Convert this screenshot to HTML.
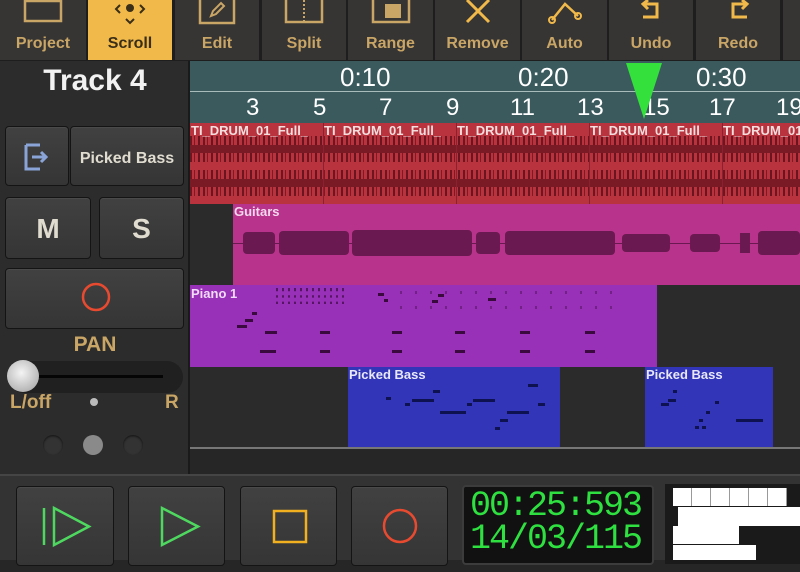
<!DOCTYPE html>
<html><head><meta charset="utf-8"><style>
*{margin:0;padding:0;box-sizing:border-box}
body{width:800px;height:560px;overflow:hidden;background:#262626;font-family:"Liberation Sans",sans-serif;position:relative}
.a{position:absolute}
.tb{position:absolute;top:0;height:60px;background:#363533;color:#c9a566;font-weight:bold;font-size:16px;text-align:center}
.tb span{position:absolute;left:0;right:0;top:35px}
.tb svg{position:absolute;left:50%;top:0;transform:translateX(-50%)}
.btn{position:absolute;background:linear-gradient(#414141,#353535);border:1px solid #141414;border-radius:4px;box-shadow:0 1px 0 #4a4a4a inset}
.lbl{color:#e0dcd0;font-weight:bold}
.wf{position:absolute;background:repeating-linear-gradient(90deg,#6e1620 0 2px,transparent 2px 4px,#7d1a26 4px 5px,transparent 5px 8px,#6a1420 8px 10px,transparent 10px 13px)}
.n{position:absolute;background:#3a0a3e;height:3px}
.b{position:absolute;background:#0f1250;height:3px}
.tl{color:#fff;font-size:32px}
</style></head><body>
<div class="a" style="left:0;top:0;width:800px;height:61px;background:#1e1e1e"></div>
<div class="tb" style="left:0;width:86px"><svg width="60" height="30"><rect x="12" y="1" width="36" height="20" fill="none" stroke="#c9a566" stroke-width="2.5"/></svg><span>Project</span></div>
<div class="tb" style="left:88px;width:84px;background:#f0b94a;color:#3a2e18"><svg width="60" height="30"><circle cx="30" cy="8" r="4" fill="#3a2e18"/><path d="M20 5l-4 4 4 4M40 5l4 4-4 4M26 19l4 4 4-4" fill="none" stroke="#3a2e18" stroke-width="2"/></svg><span>Scroll</span></div>
<div class="tb" style="left:175px;width:84px"><svg width="60" height="30"><rect x="13" y="-2" width="34" height="25" fill="none" stroke="#c9a566" stroke-width="2.5"/><path d="M24 16l2-5 8-8 3 3-8 8z" fill="none" stroke="#c9a566" stroke-width="2"/></svg><span>Edit</span></div>
<div class="tb" style="left:262px;width:84px"><svg width="60" height="30"><rect x="12" y="-2" width="36" height="24" fill="none" stroke="#c9a566" stroke-width="2.5"/><path d="M30 0v22" stroke="#c9a566" stroke-width="2" stroke-dasharray="2 2"/></svg><span>Split</span></div>
<div class="tb" style="left:348px;width:85px"><svg width="60" height="30"><rect x="12" y="-2" width="36" height="24" fill="none" stroke="#c9a566" stroke-width="2.5"/><rect x="24" y="4" width="16" height="14" fill="#c9a566"/></svg><span>Range</span></div>
<div class="tb" style="left:435px;width:85px"><svg width="60" height="30"><path d="M19 0l22 22M41 0L19 22" stroke="#f0b94a" stroke-width="3"/></svg><span>Remove</span></div>
<div class="tb" style="left:522px;width:85px"><svg width="60" height="30"><path d="M17 20l13-16 13 12" fill="none" stroke="#f0b94a" stroke-width="2.5"/><circle cx="17" cy="20" r="3" fill="none" stroke="#f0b94a" stroke-width="2"/><circle cx="43" cy="16" r="3" fill="none" stroke="#f0b94a" stroke-width="2"/></svg><span>Auto</span></div>
<div class="tb" style="left:609px;width:84px"><svg width="60" height="30"><path d="M27 0l-5 4 5 5M22 4h14v13h-14" fill="none" stroke="#f0b94a" stroke-width="3"/></svg><span>Undo</span></div>
<div class="tb" style="left:696px;width:84px"><svg width="60" height="30"><path d="M34 0l5 4-5 5M39 4h-14v13h14" fill="none" stroke="#f0b94a" stroke-width="3"/></svg><span>Redo</span></div>
<div class="tb" style="left:783px;width:17px"></div>
<div class="a" style="left:0;top:61px;width:188px;height:414px;background:#2c2c2c"></div>
<div class="a lbl" style="left:0;top:64px;width:190px;text-align:center;font-size:30px;color:#f2f2f2">Track 4</div>
<div class="btn" style="left:5px;top:126px;width:64px;height:60px"><svg width="64" height="60"><path d="M20 18h14M20 18v24h14M20 18v24" fill="none" stroke="#8aa4d8" stroke-width="3"/><path d="M26 30h14M35 25l5 5-5 5" fill="none" stroke="#8aa4d8" stroke-width="3"/></svg></div>
<div class="btn lbl" style="left:70px;top:126px;width:114px;height:60px;font-size:16px;text-align:center;line-height:64px">Picked Bass</div>
<div class="btn lbl" style="left:5px;top:197px;width:86px;height:62px;font-size:28px;text-align:center;line-height:62px">M</div>
<div class="btn lbl" style="left:99px;top:197px;width:85px;height:62px;font-size:28px;text-align:center;line-height:62px">S</div>
<div class="btn" style="left:5px;top:268px;width:179px;height:61px"><svg width="179" height="61"><circle cx="90" cy="28" r="13" fill="none" stroke="#e84a30" stroke-width="2.5"/></svg></div>
<div class="a" style="left:0;top:333px;width:190px;text-align:center;color:#c9a566;font-weight:bold;font-size:21px">PAN</div>
<div class="a" style="left:8px;top:361px;width:175px;height:32px;background:#202020;border-radius:16px"></div>
<div class="a" style="left:30px;top:375px;width:133px;height:3px;background:#050505"></div>
<div class="a" style="left:7px;top:360px;width:32px;height:32px;border-radius:50%;background:radial-gradient(circle at 45% 40%,#f4f4f4,#b8b8b8 70%,#888)"></div>
<div class="a" style="left:10px;top:392px;color:#c9a566;font-weight:bold;font-size:19px">L/off</div>
<div class="a" style="left:165px;top:392px;color:#c9a566;font-weight:bold;font-size:19px">R</div>
<div class="a" style="left:90px;top:398px;width:8px;height:8px;border-radius:50%;background:#bbb"></div>
<div class="a" style="left:43px;top:435px;width:20px;height:20px;border-radius:50%;background:#333;box-shadow:inset 0 1px 2px #111"></div>
<div class="a" style="left:83px;top:435px;width:20px;height:20px;border-radius:50%;background:#8a8a8a"></div>
<div class="a" style="left:123px;top:435px;width:20px;height:20px;border-radius:50%;background:#333;box-shadow:inset 0 1px 2px #111"></div>
<div class="a" style="left:190px;top:61px;width:610px;height:62px;background:#3a5a5e"></div>
<div class="a" style="left:190px;top:91px;width:610px;height:1px;background:#a8bcbc"></div>
<div class="a tl" style="left:340px;top:62px;font-size:26px">0:10</div>
<div class="a tl" style="left:518px;top:62px;font-size:26px">0:20</div>
<div class="a tl" style="left:696px;top:62px;font-size:26px">0:30</div>
<div class="a" style="left:190px;top:94px;width:610px;height:28px;color:#fff;font-size:24px">
<span class="a" style="left:56px">3</span><span class="a" style="left:123px">5</span><span class="a" style="left:189px">7</span><span class="a" style="left:256px">9</span><span class="a" style="left:320px">11</span><span class="a" style="left:387px">13</span><span class="a" style="left:453px">15</span><span class="a" style="left:519px">17</span><span class="a" style="left:586px">19</span></div>
<svg class="a" style="left:624px;top:61px" width="40" height="60"><path d="M2 2h36L20 58z" fill="#34e03c"/></svg>
<div class="a" style="left:190px;top:123px;width:610px;height:81px;background:#b8333e"></div>
<div class="wf" style="left:190px;top:136px;width:610px;height:26px"></div>
<div class="wf" style="left:190px;top:170px;width:610px;height:26px"></div>
<div class="a" style="left:190px;top:145px;width:610px;height:8px;background:#7a1a24"></div>
<div class="a" style="left:190px;top:179px;width:610px;height:8px;background:#7a1a24"></div>
<div class="a" style="left:190px;top:123px;width:610px;height:16px;color:#f4dede;font-weight:bold;font-size:13px;white-space:nowrap">
<span class="a" style="left:1px">TI_DRUM_01_Full_</span><span class="a" style="left:134px">TI_DRUM_01_Full_</span><span class="a" style="left:267px">TI_DRUM_01_Full_</span><span class="a" style="left:400px">TI_DRUM_01_Full_</span><span class="a" style="left:533px">TI_DRUM_01_Full_</span></div>
<div class="a" style="left:323px;top:123px;width:1px;height:81px;background:#8a2030"></div>
<div class="a" style="left:456px;top:123px;width:1px;height:81px;background:#8a2030"></div>
<div class="a" style="left:589px;top:123px;width:1px;height:81px;background:#8a2030"></div>
<div class="a" style="left:722px;top:123px;width:1px;height:81px;background:#8a2030"></div>
<div class="a" style="left:190px;top:204px;width:43px;height:81px;background:#2b2b2b"></div>
<div class="a" style="left:233px;top:204px;width:567px;height:81px;background:#b8338c"></div>
<div class="a" style="left:234px;top:204px;color:#f4d8ee;font-weight:bold;font-size:13px">Guitars</div>
<div class="a" style="left:233px;top:243px;width:567px;height:1px;background:#6a1a50"></div>
<div class="a" style="left:243px;top:232px;width:32px;height:22px;background:#6a1a50;border-radius:4px"></div>
<div class="a" style="left:279px;top:231px;width:70px;height:24px;background:#6a1a50;border-radius:4px"></div>
<div class="a" style="left:352px;top:230px;width:120px;height:26px;background:#6a1a50;border-radius:4px"></div>
<div class="a" style="left:476px;top:232px;width:24px;height:22px;background:#6a1a50;border-radius:4px"></div>
<div class="a" style="left:505px;top:231px;width:110px;height:24px;background:#6a1a50;border-radius:4px"></div>
<div class="a" style="left:622px;top:234px;width:48px;height:18px;background:#6a1a50;border-radius:4px"></div>
<div class="a" style="left:690px;top:234px;width:30px;height:18px;background:#6a1a50;border-radius:4px"></div>
<div class="a" style="left:740px;top:233px;width:10px;height:20px;background:#6a1a50"></div>
<div class="a" style="left:758px;top:231px;width:42px;height:24px;background:#6a1a50;border-radius:4px"></div>
<div class="a" style="left:190px;top:285px;width:467px;height:82px;background:#9830b8"></div>
<div class="a" style="left:191px;top:286px;color:#f0dcf8;font-weight:bold;font-size:13px">Piano 1</div>
<div class="n" style="left:237px;top:325px;width:10px"></div><div class="n" style="left:245px;top:319px;width:8px"></div><div class="n" style="left:252px;top:312px;width:5px"></div>
<div class="n" style="left:265px;top:331px;width:12px"></div><div class="n" style="left:260px;top:350px;width:16px"></div>
<div class="n" style="left:320px;top:331px;width:10px"></div><div class="n" style="left:320px;top:350px;width:10px"></div>
<div class="n" style="left:392px;top:331px;width:10px"></div><div class="n" style="left:392px;top:350px;width:10px"></div>
<div class="n" style="left:455px;top:331px;width:10px"></div><div class="n" style="left:455px;top:350px;width:10px"></div>
<div class="n" style="left:520px;top:331px;width:10px"></div><div class="n" style="left:520px;top:350px;width:10px"></div>
<div class="n" style="left:585px;top:331px;width:10px"></div><div class="n" style="left:585px;top:350px;width:10px"></div>
<div class="n" style="left:378px;top:293px;width:6px"></div><div class="n" style="left:384px;top:299px;width:4px"></div><div class="n" style="left:432px;top:300px;width:6px"></div><div class="n" style="left:438px;top:294px;width:6px"></div><div class="n" style="left:488px;top:298px;width:8px"></div>
<div class="a" style="left:276px;top:288px;width:70px;height:16px;background:repeating-linear-gradient(90deg,#3a0a3e 0 2px,transparent 2px 6px);opacity:.7;clip-path:polygon(0 0,100% 0,100% 20%,0 20%,0 45%,100% 45%,100% 60%,0 60%,0 85%,100% 85%,100% 100%,0 100%)"></div>
<div class="a" style="left:400px;top:288px;width:220px;height:30px;background:repeating-linear-gradient(90deg,#3a0a3e 0 2px,transparent 2px 15px);opacity:.4;clip-path:polygon(0 10%,100% 10%,100% 20%,0 20%,0 60%,100% 60%,100% 70%,0 70%)"></div>
<div class="a" style="left:657px;top:285px;width:143px;height:82px;background:#2b2b2b"></div>
<div class="a" style="left:190px;top:367px;width:610px;height:81px;background:#2b2b2b"></div>
<div class="a" style="left:348px;top:367px;width:212px;height:81px;background:#3235b8"></div>
<div class="a" style="left:645px;top:367px;width:128px;height:81px;background:#3235b8"></div>
<div class="a" style="left:349px;top:367px;color:#e8e8f8;font-weight:bold;font-size:13px">Picked Bass</div>
<div class="a" style="left:646px;top:367px;color:#e8e8f8;font-weight:bold;font-size:13px">Picked Bass</div>
<div class="b" style="left:386px;top:397px;width:5px"></div><div class="b" style="left:405px;top:403px;width:5px"></div><div class="b" style="left:412px;top:399px;width:22px"></div><div class="b" style="left:440px;top:411px;width:26px"></div><div class="b" style="left:433px;top:390px;width:7px"></div><div class="b" style="left:467px;top:403px;width:5px"></div><div class="b" style="left:473px;top:399px;width:22px"></div><div class="b" style="left:507px;top:411px;width:22px"></div><div class="b" style="left:500px;top:419px;width:8px"></div><div class="b" style="left:495px;top:427px;width:5px"></div><div class="b" style="left:528px;top:384px;width:10px"></div><div class="b" style="left:538px;top:403px;width:7px"></div>
<div class="b" style="left:673px;top:390px;width:4px"></div><div class="b" style="left:661px;top:403px;width:8px"></div><div class="b" style="left:668px;top:399px;width:8px"></div><div class="b" style="left:715px;top:401px;width:4px"></div><div class="b" style="left:706px;top:411px;width:4px"></div><div class="b" style="left:699px;top:419px;width:4px"></div><div class="b" style="left:695px;top:426px;width:4px"></div><div class="b" style="left:702px;top:426px;width:4px"></div><div class="b" style="left:736px;top:419px;width:27px"></div>
<div class="a" style="left:190px;top:447px;width:610px;height:2px;background:#777"></div>
<div class="a" style="left:188px;top:61px;width:2px;height:414px;background:#1a1a1a"></div>
<div class="a" style="left:0;top:474px;width:800px;height:86px;background:#333;border-top:2px solid #454545"></div>
<div class="btn" style="left:16px;top:486px;width:98px;height:80px"><svg width="98" height="80"><path d="M27 21v37" stroke="#4ed860" stroke-width="2.5"/><path d="M37 21v37l35-18.5z" fill="none" stroke="#4ed860" stroke-width="2.5"/></svg></div>
<div class="btn" style="left:128px;top:486px;width:97px;height:80px"><svg width="97" height="80"><path d="M33 21v37l36-18.5z" fill="none" stroke="#4ed860" stroke-width="2.5"/></svg></div>
<div class="btn" style="left:240px;top:486px;width:97px;height:80px"><svg width="97" height="80"><rect x="33" y="24" width="32" height="31" fill="none" stroke="#f0b020" stroke-width="2.5"/></svg></div>
<div class="btn" style="left:351px;top:486px;width:97px;height:80px"><svg width="97" height="80"><circle cx="48" cy="39" r="16" fill="none" stroke="#e84a30" stroke-width="2.5"/></svg></div>
<div class="a" style="left:462px;top:485px;width:192px;height:80px;background:#111;border:2px solid #3c3c3c;border-radius:4px"></div>
<div class="a" style="left:470px;top:490px;color:#2ee040;font-family:'Liberation Mono',monospace;font-size:35px;line-height:33px;letter-spacing:-2px">00:25:593<br>14/03/115</div>
<div class="a" style="left:665px;top:484px;width:135px;height:80px;background:#1a1a1a"></div>
<div class="a" style="left:673px;top:488px;width:114px;height:18px;background:repeating-linear-gradient(90deg,#fff 0 18px,#999 18px 19px)"></div>
<div class="a" style="left:678px;top:507px;width:122px;height:19px;background:#fff"></div>
<div class="a" style="left:673px;top:526px;width:66px;height:18px;background:#fff"></div>
<div class="a" style="left:673px;top:545px;width:83px;height:15px;background:#fff"></div>
</body></html>
